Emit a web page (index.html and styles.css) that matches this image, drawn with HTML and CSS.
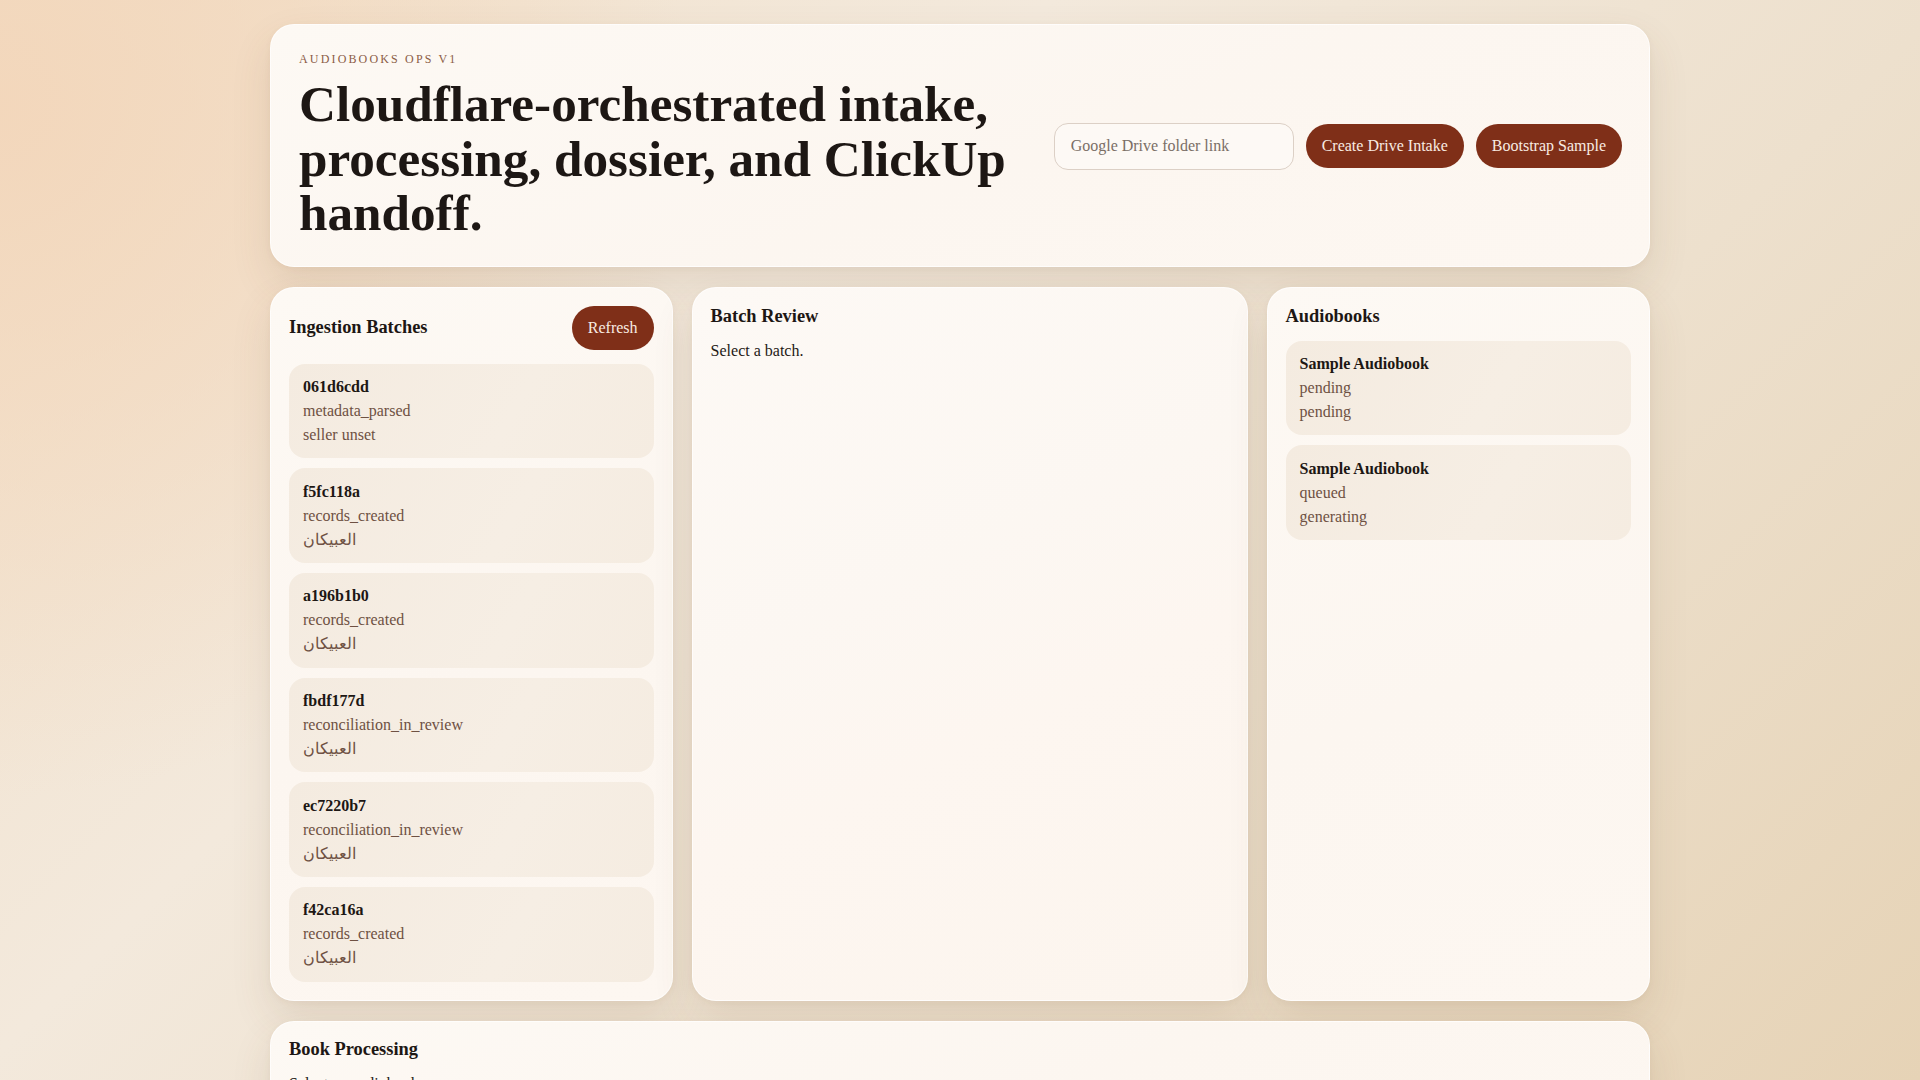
FILE: index.html
```html
<!DOCTYPE html>
<html lang="en">
<head>
<meta charset="utf-8">
<title>Audiobooks Ops v1</title>
<link rel="stylesheet" href="styles.css">
</head>
<body>
<main class="shell">
  <header class="hero card">
    <div class="hero-text">
      <p class="eyebrow">Audiobooks Ops v1</p>
      <h1 class="headline">Cloudflare-orchestrated intake, processing, dossier, and ClickUp handoff.</h1>
    </div>
    <div class="hero-actions">
      <input class="drive-input" type="text" placeholder="Google Drive folder link">
      <button class="btn">Create Drive Intake</button>
      <button class="btn">Bootstrap Sample</button>
    </div>
  </header>

  <section class="grid">
    <div class="panel card">
      <div class="panel-head">
        <h2 class="panel-title">Ingestion Batches</h2>
        <button class="btn">Refresh</button>
      </div>
      <ul class="list">
        <li class="item"><strong class="item-title">061d6cdd</strong><span class="item-line">metadata_parsed</span><span class="item-line">seller unset</span></li>
        <li class="item"><strong class="item-title">f5fc118a</strong><span class="item-line">records_created</span><span class="item-line">العبيكان</span></li>
        <li class="item"><strong class="item-title">a196b1b0</strong><span class="item-line">records_created</span><span class="item-line">العبيكان</span></li>
        <li class="item"><strong class="item-title">fbdf177d</strong><span class="item-line">reconciliation_in_review</span><span class="item-line">العبيكان</span></li>
        <li class="item"><strong class="item-title">ec7220b7</strong><span class="item-line">reconciliation_in_review</span><span class="item-line">العبيكان</span></li>
        <li class="item"><strong class="item-title">f42ca16a</strong><span class="item-line">records_created</span><span class="item-line">العبيكان</span></li>
      </ul>
    </div>

    <div class="panel card panel-review">
      <h2 class="panel-title">Batch Review</h2>
      <p class="empty">Select a batch.</p>
    </div>

    <div class="panel card">
      <h2 class="panel-title">Audiobooks</h2>
      <ul class="list">
        <li class="item"><strong class="item-title">Sample Audiobook</strong><span class="item-line">pending</span><span class="item-line">pending</span></li>
        <li class="item"><strong class="item-title">Sample Audiobook</strong><span class="item-line">queued</span><span class="item-line">generating</span></li>
      </ul>
    </div>
  </section>

  <section class="panel card processing">
    <h2 class="panel-title">Book Processing</h2>
    <p class="empty">Select an audiobook.</p>
  </section>
</main>
</body>
</html>
```

FILE: styles.css
```css
* { box-sizing: border-box; }

html, body { margin: 0; }

body {
  font-family: "Liberation Serif", "Times New Roman", serif;
  font-size: 16px;
  color: #1f1915;
  min-height: 100vh;
  background:
    radial-gradient(circle at 0% 10%, rgba(243, 214, 186, 0.9) 0, rgba(243, 214, 186, 0) 32%),
    linear-gradient(135deg, #f1dfc8 0%, #f3e9dc 35%, #ede0cd 65%, #e6d3b6 100%);
  background-attachment: fixed;
}

.shell {
  max-width: 1380px;
  margin: 0 auto;
  padding: 24px 0 40px;
  display: flex;
  flex-direction: column;
  gap: 20px;
}

.card {
  background: linear-gradient(160deg, #fdf9f4 0%, #fcf6f0 55%, #fdf7f1 100%);
  border: 1px solid rgba(255, 255, 255, 0.7);
  border-radius: 24px;
  box-shadow: 0 18px 40px rgba(110, 76, 40, 0.12), 0 2px 6px rgba(110, 76, 40, 0.05);
}

.hero {
  display: flex;
  align-items: center;
  justify-content: space-between;
  gap: 32px;
  padding: 27px 27px 25px 28px;
}

.hero-text { flex: 1; min-width: 0; }

.eyebrow {
  margin: 0 0 10px;
  font-size: 12px;
  line-height: 15px;
  letter-spacing: 0.18em;
  text-transform: uppercase;
  color: #8b5c46;
}

.headline {
  margin: 0;
  font-size: 51.2px;
  line-height: 1.065;
  font-weight: 700;
  color: #1d1714;
}

.hero-actions {
  display: flex;
  align-items: center;
  gap: 12px;
  flex: none;
}

.drive-input {
  width: 240px;
  height: 47px;
  padding: 0 16px;
  border: 1px solid #dcd0c6;
  border-radius: 14px;
  background: #fdf9f5;
  font-family: inherit;
  font-size: 16px;
  color: #2a211c;
  outline: none;
}

.drive-input::placeholder { color: #7a6e66; }

.btn {
  border: 0;
  border-radius: 999px;
  background: #7f2f18;
  color: #f8ebe2;
  font-family: inherit;
  font-size: 16px;
  line-height: 20px;
  padding: 12px 16px;
  cursor: pointer;
  white-space: nowrap;
}

.grid {
  display: grid;
  grid-template-columns: 1.05fr 1.45fr 1fr;
  gap: 19px;
  align-items: stretch;
}

.panel {
  padding: 18px;
  display: flex;
  flex-direction: column;
  gap: 14px;
}

.panel-head {
  display: flex;
  align-items: center;
  justify-content: space-between;
}

.panel-title {
  margin: 0;
  font-size: 18.4px;
  line-height: 21px;
  font-weight: 700;
  color: #1d1714;
}

.panel-review {
  background: linear-gradient(155deg, #fdf9f5 0%, #fcf7f2 40%, #fdf6f0 60%, #fcf5ee 100%);
}

.list {
  list-style: none;
  margin: 0;
  padding: 0;
  display: flex;
  flex-direction: column;
  gap: 10px;
}

.item {
  display: flex;
  flex-direction: column;
  padding: 11.4px 14px 11.3px;
  border-radius: 16px;
  background: linear-gradient(120deg, #f4ebe0 0%, #f6eee4 60%, #f5ece1 100%);
  line-height: 24px;
}

.item-title {
  font-weight: 700;
  color: #1d1714;
}

.item-line { color: #6e5143; }

.empty {
  margin: 0;
  line-height: 20px;
  color: #1f1915;
}

.processing {
  min-height: 140px;
  padding-top: 17px;
}
```
